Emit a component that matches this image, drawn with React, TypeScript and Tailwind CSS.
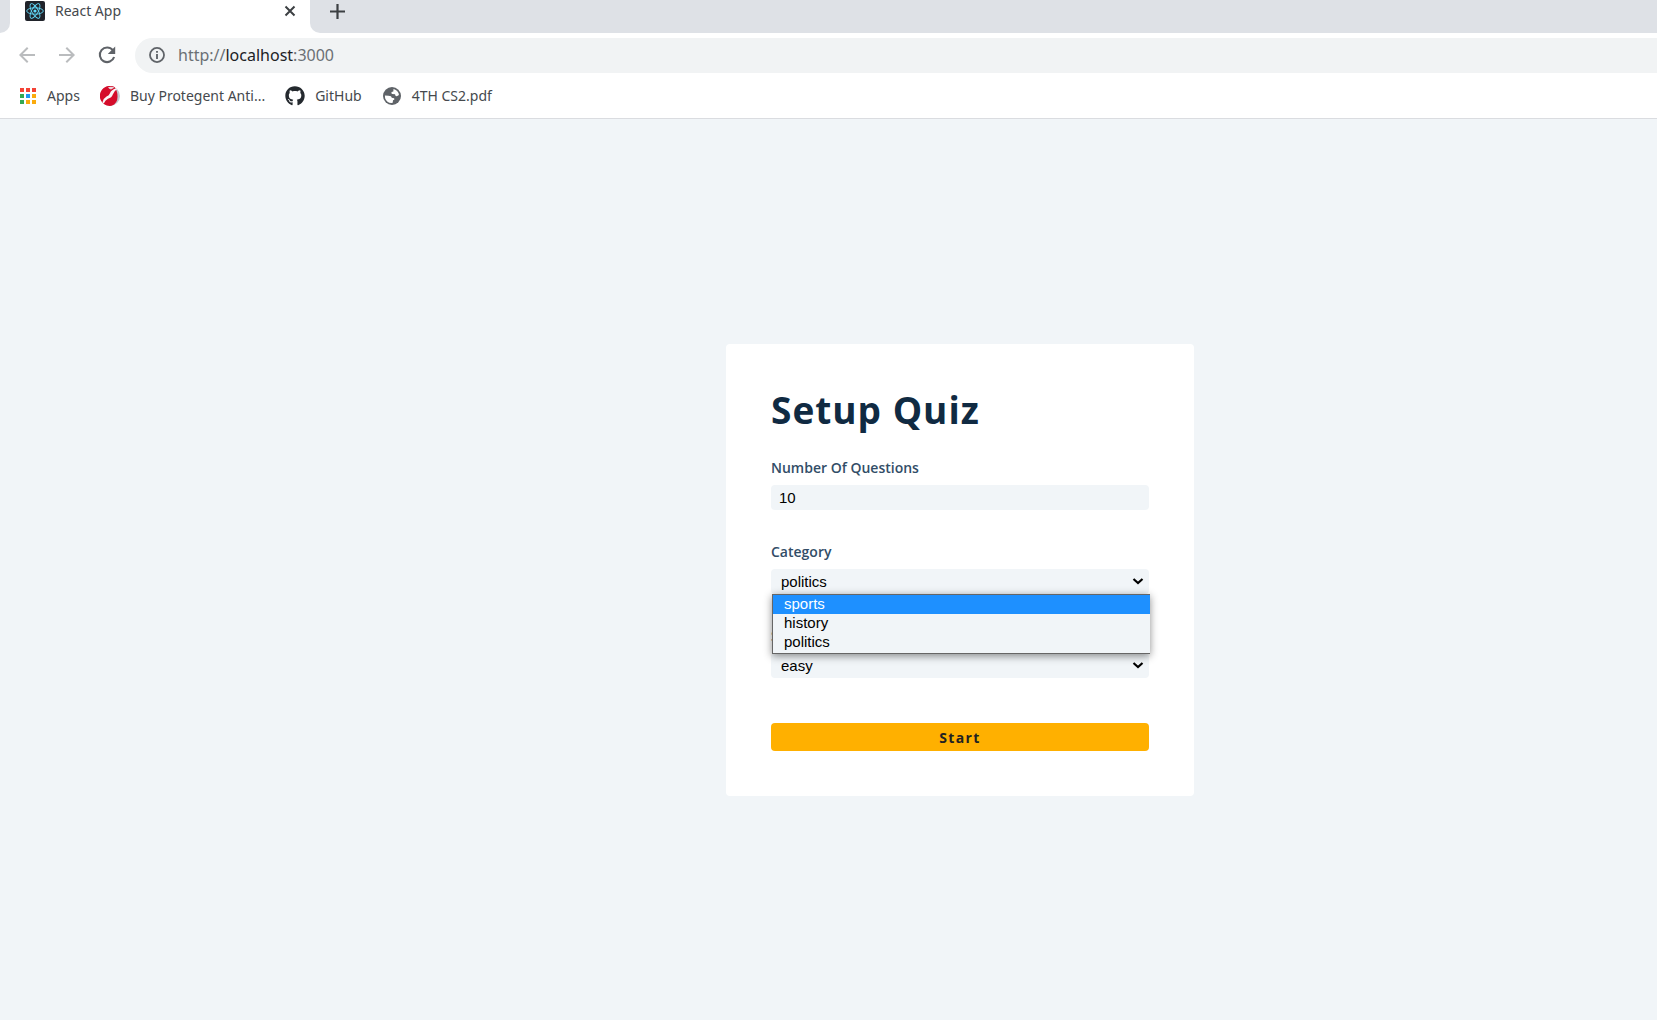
import { useState } from "react";
import { FaGithub } from "react-icons/fa";
import { MdArrowBack, MdArrowForward } from "react-icons/md";

const categories = ["sports", "history", "politics"];
const difficulties = ["easy", "medium", "hard"];

function ReactIcon() {
  return (
    <svg viewBox="0 0 20 20" className="size-5 shrink-0" aria-hidden="true">
      <rect width="20" height="20" rx="2" fill="#20232a" />
      <g fill="none" stroke="#61dafb" strokeWidth="0.9">
        <ellipse cx="10" cy="10" rx="8.3" ry="3.2" />
        <ellipse cx="10" cy="10" rx="8.3" ry="3.2" transform="rotate(60 10 10)" />
        <ellipse cx="10" cy="10" rx="8.3" ry="3.2" transform="rotate(120 10 10)" />
      </g>
      <circle cx="10" cy="10" r="1.6" fill="#61dafb" />
    </svg>
  );
}

function ReloadIcon() {
  return (
    <svg viewBox="0 0 24 24" className="size-6" aria-hidden="true">
      <path d="M17.800 7.200 A7.300 7.300 0 1 0 19.100 14" fill="none" stroke="#5f6368" strokeWidth="2.100" />
      <path d="M20.200 3.600 V11 H12.800 Z" fill="#5f6368" />
    </svg>
  );
}

function InfoIcon() {
  return (
    <svg viewBox="0 0 18 18" className="mx-px size-4 shrink-0" aria-hidden="true">
      <circle cx="9" cy="9" r="7.900" fill="none" stroke="#5f6368" strokeWidth="2" />
      <path d="M9 4.500 V6.600 M9 8 V13.500" stroke="#5f6368" strokeWidth="2.100" />
    </svg>
  );
}

function AppsIcon() {
  const colors = ["#f44336", "#f44336", "#f44336", "#34a853", "#2196f3", "#fbab0d", "#34a853", "#fbab0d", "#fbab0d"];
  return (
    <svg viewBox="0 0 16 16" className="mx-px size-4 shrink-0" aria-hidden="true">
      {colors.map((fill, i) => (
        <rect key={i} x={(i % 3) * 6} y={Math.floor(i / 3) * 6} width="4" height="4" fill={fill} />
      ))}
    </svg>
  );
}

function ProtegentIcon() {
  return (
    <svg viewBox="0 0 20 20" className="size-5 shrink-0" aria-hidden="true">
      <circle cx="10" cy="10" r="10" fill="#c3c6ce" />
      <path d="M14.500 1.100 A10 10 0 1 0 11.500 19.800 Q17.500 17.500 17.500 11 Q17.600 5 14.500 1.100 Z" fill="#d50c2a" />
      <path d="M16.300 2.300 Q11.500 3.500 9.800 7.400 Q9.300 9.500 6.500 10.600 Q3.200 12.500 2.400 16.400 L3.800 17.600 Q5 14.200 8 12.800 Q11.800 11.800 12.800 8.600 Q13.800 5 17 3.300 Z" fill="#faf6f7" />
      <path d="M8 1.200 Q11 0.300 14.500 1.600 L11 3.600 Q9 3 8 1.200 Z" fill="#e8d5da" />
    </svg>
  );
}

function GlobeIcon() {
  return (
    <svg viewBox="0 0 18 18" className="mx-px size-[18px] shrink-0" aria-hidden="true">
      <circle cx="9" cy="9" r="9" fill="#5f6368" />
      <path d="M10.500 1.900 Q14.500 3 15.700 6.400 L15.900 8 Q14.500 9.500 12.600 9 L12 7.200 L9.200 7 Q7.800 6.500 8.600 5 L10.300 4.600 Z" fill="#fff" />
      <path d="M1.900 8.600 L5.500 8.800 Q8.600 9 8.700 10.800 L11.200 11.200 Q12 13 10 13.300 L9.700 15.800 Q4 16.500 2.100 11.200 Z" fill="#fff" />
    </svg>
  );
}

function Chevron() {
  return (
    <svg viewBox="0 0 12 8" className="pointer-events-none absolute right-[5px] top-[9px] h-2 w-3" aria-hidden="true">
      <path d="M1.500 1 L6 5 L10.500 1" fill="none" stroke="#000" strokeWidth="2.200" />
    </svg>
  );
}

function BrowserChrome() {
  return (
    <header className="border-b border-[#dadce0] bg-white font-['Noto_Sans',sans-serif] text-[14px] text-[#45494d]">
      <div className="flex h-[33px]">
        <div className="w-2.5 rounded-br-[10px] bg-[#dee1e6]" />
        <div className="flex h-[22px] w-[300px] items-center pl-[15px] pr-3.5">
          <ReactIcon />
          <span className="flex-1 pb-0.5 pl-2.5">React App</span>
          <button aria-label="Close tab">
            <svg viewBox="0 0 12 12" className="size-3">
              <path d="M1.500 1.500 L10.500 10.500 M10.500 1.500 L1.500 10.500" stroke="#3c4043" strokeWidth="2" />
            </svg>
          </button>
        </div>
        <div className="flex-1 rounded-bl-[10px] bg-[#dee1e6] pl-5 pt-1">
          <button aria-label="New tab" className="block">
            <svg viewBox="0 0 15 15" className="size-[15px]">
              <path d="M7.500 0 V15 M0 7.500 H15" stroke="#3c4043" strokeWidth="2.200" />
            </svg>
          </button>
        </div>
      </div>
      <div className="flex h-11 items-center pl-[15px]">
        <button aria-label="Back" className="mr-4 text-[#babcbe]"><MdArrowBack size={24} /></button>
        <button aria-label="Forward" className="mr-4 text-[#babcbe]"><MdArrowForward size={24} /></button>
        <button aria-label="Reload" className="mr-4"><ReloadIcon /></button>
        <div className="flex h-[35px] flex-1 items-center gap-3 rounded-l-full bg-[#f1f3f4] pl-[13px]">
          <InfoIcon />
          <div role="textbox" aria-label="Address" tabIndex={0} className="text-[16px] text-[#6b7075]">
            http://<span className="text-[#202124]">localhost</span>:3000
          </div>
        </div>
      </div>
      <nav aria-label="Bookmarks" className="flex h-[41px] items-center gap-5 pb-1 pl-[19px]">
        <a href="#apps" className="flex items-center gap-2.5"><AppsIcon />Apps</a>
        <a href="#protegent" className="flex items-center gap-2.5"><ProtegentIcon />Buy Protegent Anti...</a>
        <a href="#github" className="flex items-center gap-2.5"><FaGithub size={20} color="#24292e" />GitHub</a>
        <a href="#pdf" className="flex items-center gap-2.5"><GlobeIcon />4TH CS2.pdf</a>
      </nav>
    </header>
  );
}

const labelClass = "mb-1.5 block text-[14px] leading-[23px] font-semibold text-[#324d67]";
const fieldClass =
  "block h-[25px] w-full appearance-none rounded bg-[#f1f5f8] font-['Liberation_Sans',Arial,sans-serif] text-[15px] leading-[25px] text-black outline-none";

export default function App() {
  const [amount, setAmount] = useState("10");
  const [category, setCategory] = useState("politics");
  const [difficulty, setDifficulty] = useState("easy");
  const [open, setOpen] = useState(true);

  return (
    <div className="flex min-h-screen flex-col bg-[#f1f5f8]">
      <BrowserChrome />
      <main className="flex flex-1 items-center justify-center pl-[263px] font-['Open_Sans',sans-serif]">
        <form className="w-full max-w-[468px] rounded bg-white p-[45px]" onSubmit={(e) => e.preventDefault()}>
          <h1 className="mb-[25px] text-[37px] leading-[42px] font-bold tracking-[1px] text-[#102a42]">Setup Quiz</h1>
          <div className="mb-[30px]">
            <label htmlFor="amount" className={labelClass}>Number Of Questions</label>
            <input id="amount" value={amount} onChange={(e) => setAmount(e.target.value)} className={`${fieldClass} px-2`} />
          </div>
          <div className="mb-[30px]">
            <label htmlFor="category" className={labelClass}>Category</label>
            <div className="relative">
              <select id="category" value={category} onChange={(e) => setCategory(e.target.value)} className={`${fieldClass} px-2.5`}>
                {categories.map((name) => <option key={name}>{name}</option>)}
              </select>
              <Chevron />
              {open && (
                <ul
                  role="listbox"
                  aria-label="Category options"
                  className="absolute left-px top-[25px] z-10 w-full border-y border-l border-[#666] bg-[#f1f5f8] pb-px font-['Liberation_Sans',Arial,sans-serif] text-[15px] leading-[17px] text-black shadow-[0_2px_8px_rgba(0,0,0,0.45)]"
                >
                  {categories.map((name, i) => (
                    <li
                      key={name}
                      role="option"
                      aria-selected={name === category}
                      onClick={() => { setCategory(name); setOpen(false); }}
                      className={i === 0 ? "h-[19px] bg-[#1e90ff] px-[11px] text-white" : "h-[19px] px-[11px]"}
                    >
                      {name}
                    </li>
                  ))}
                </ul>
              )}
            </div>
          </div>
          <div className="mb-[45px]">
            <label htmlFor="difficulty" className={labelClass}>Select Difficulty</label>
            <div className="relative">
              <select id="difficulty" value={difficulty} onChange={(e) => setDifficulty(e.target.value)} className={`${fieldClass} px-2.5`}>
                {difficulties.map((name) => <option key={name}>{name}</option>)}
              </select>
              <Chevron />
            </div>
          </div>
          <button type="submit" className="block h-7 w-full rounded bg-[#ffb000] pt-px text-[14px] leading-7 font-bold tracking-widest text-[#222]">
            Start
          </button>
        </form>
      </main>
    </div>
  );
}
